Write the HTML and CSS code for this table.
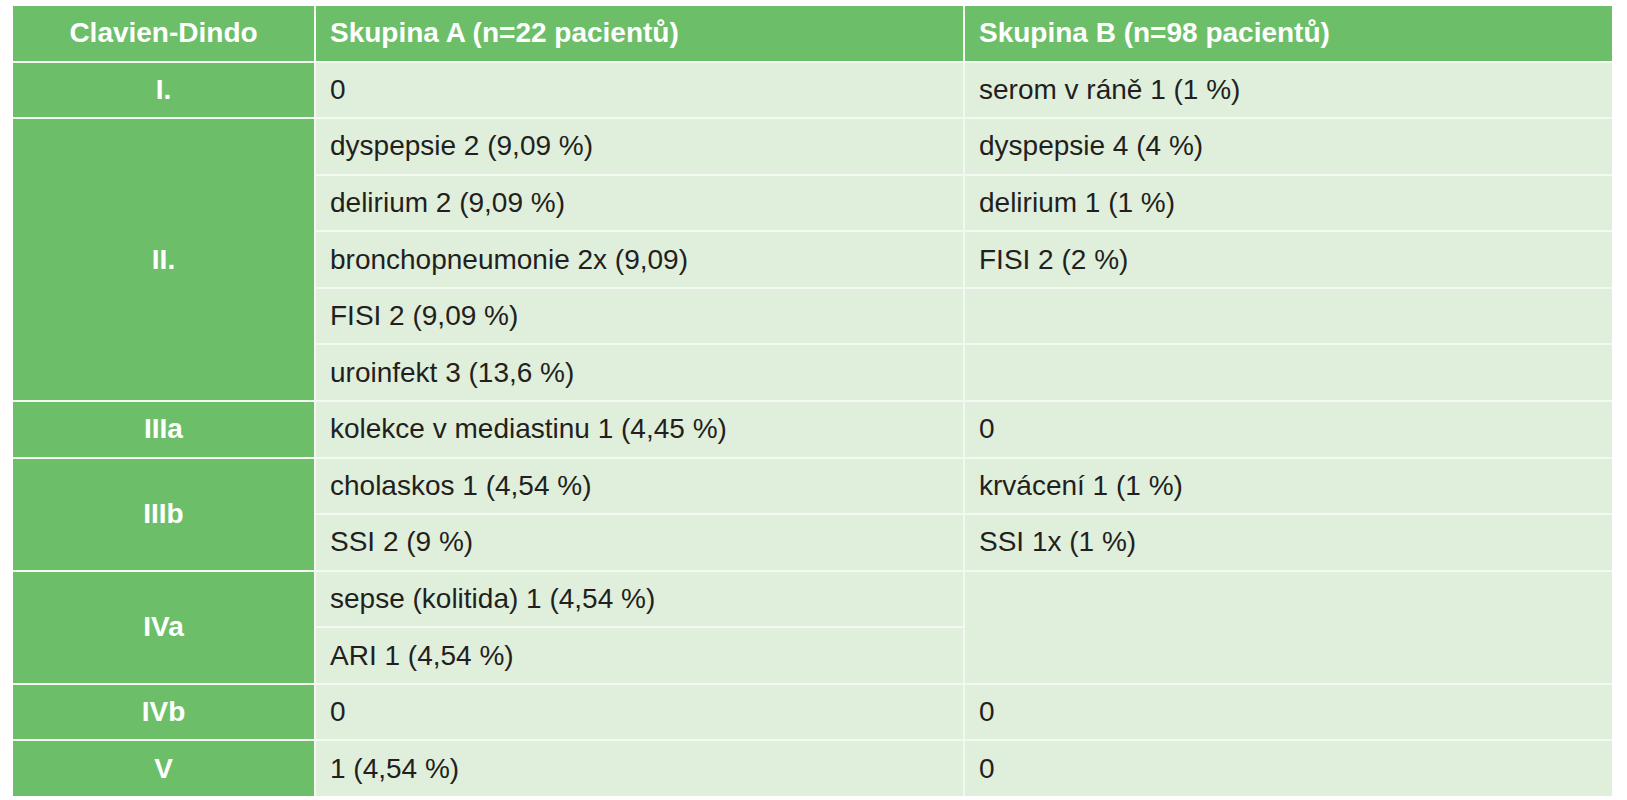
FILE: index.html
```html
<!DOCTYPE html>
<html lang="cs">
<head>
<meta charset="utf-8">
<title>Clavien-Dindo</title>
<link rel="stylesheet" href="styles.css">
</head>
<body>
<div class="page">
  <div class="grid">
    <div class="cell head center">Clavien-Dindo</div>
    <div class="cell head">Skupina A (n=22 pacientů)</div>
    <div class="cell head">Skupina B (n=98 pacientů)</div>

    <div class="cell grade">I.</div>
    <div class="cell">0</div>
    <div class="cell">serom v ráně 1 (1 %)</div>

    <div class="cell grade span5">II.</div>
    <div class="cell">dyspepsie 2 (9,09 %)</div>
    <div class="cell">dyspepsie 4 (4 %)</div>
    <div class="cell">delirium 2 (9,09 %)</div>
    <div class="cell">delirium 1 (1 %)</div>
    <div class="cell">bronchopneumonie 2x (9,09)</div>
    <div class="cell">FISI 2 (2 %)</div>
    <div class="cell">FISI 2 (9,09 %)</div>
    <div class="cell"></div>
    <div class="cell">uroinfekt 3 (13,6 %)</div>
    <div class="cell"></div>

    <div class="cell grade">IIIa</div>
    <div class="cell">kolekce v mediastinu 1 (4,45 %)</div>
    <div class="cell">0</div>

    <div class="cell grade span2">IIIb</div>
    <div class="cell">cholaskos 1 (4,54 %)</div>
    <div class="cell">krvácení 1 (1 %)</div>
    <div class="cell">SSI 2 (9 %)</div>
    <div class="cell">SSI 1x (1 %)</div>

    <div class="cell grade span2">IVa</div>
    <div class="cell">sepse (kolitida) 1 (4,54 %)</div>
    <div class="cell span2"></div>
    <div class="cell">ARI 1 (4,54 %)</div>

    <div class="cell grade">IVb</div>
    <div class="cell">0</div>
    <div class="cell">0</div>

    <div class="cell grade">V</div>
    <div class="cell">1 (4,54 %)</div>
    <div class="cell">0</div>
  </div>
</div>
</body>
</html>
```

FILE: styles.css
```css
html, body {
  margin: 0;
  padding: 0;
  background: #ffffff;
}

.page {
  padding: 6px 15px 4px 13px;
}

.grid {
  display: grid;
  grid-template-columns: 301px 647px 647px;
  grid-template-rows: repeat(14, 1fr);
  gap: 2px;
  height: 790px;
  width: 1599px;
  background: #f3f9f1;
  font-family: "Liberation Sans", Arial, sans-serif;
  font-size: 28px;
  color: #231f20;
}

.cell {
  background: #e0efdb;
  display: flex;
  align-items: center;
  padding-left: 14px;
  white-space: nowrap;
}

.head {
  background: #6cbf68;
  color: #ffffff;
  font-weight: bold;
}

.center {
  justify-content: center;
  padding-left: 0;
}

.grade {
  background: #6cbf68;
  color: #ffffff;
  font-weight: bold;
  justify-content: center;
  padding-left: 0;
}

.span5 {
  grid-row: span 5;
}

.span2 {
  grid-row: span 2;
}
```
